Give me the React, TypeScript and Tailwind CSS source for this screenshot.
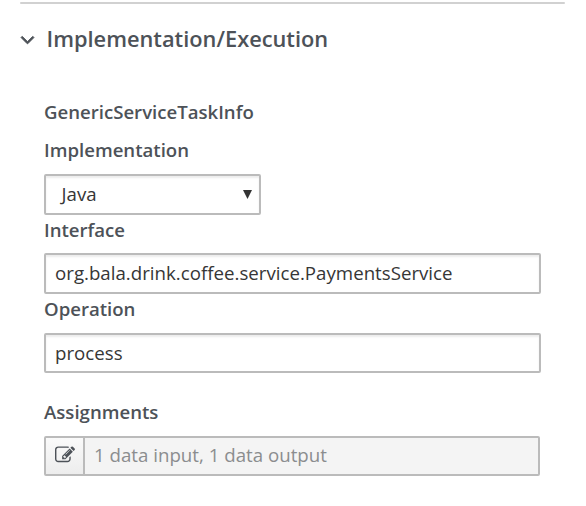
import React, { useState } from 'react';

const AngleDownIcon: React.FC<{ className?: string }> = ({ className }) => (
  <svg viewBox="0 0 1792 1792" fill="currentColor" className={className} aria-hidden="true">
    <path d="M1395 736q0 13-10 23l-466 466q-10 10-23 10t-23-10l-466-466q-10-10-10-23t10-23l50-50q10-10 23-10t23 10l393 393 393-393q10-10 23-10t23 10l50 50q10 10 10 23z" stroke="currentColor" strokeWidth="65" />
  </svg>
);

const EditIcon: React.FC<{ className?: string }> = ({ className }) => (
  <svg viewBox="0 0 1792 1792" fill="currentColor" className={className} aria-hidden="true">
    <path d="M888 1184l116-116-152-152-116 116v56h96v96h56zm440-720q-16-16-33 1l-350 350q-17 17-1 33t33-1l350-350q17-17 1-33zm80 594v190q0 119-84.5 203.5t-203.5 84.5h-832q-119 0-203.5-84.5t-84.5-203.5v-832q0-119 84.5-203.5t203.5-84.5h832q63 0 117 25 15 7 18 23 3 17-9 29l-49 49q-14 14-32 8-23-6-45-6h-832q-66 0-113 47t-47 113v832q0 66 47 113t113 47h832q66 0 113-47t47-113v-126q0-13 9-22l64-64q15-15 35-7t20 29zm-96-738l288 288-672 672h-288v-288zm444 132l-92 92-288-288 92-92q28-28 68-28t68 28l152 152q28 28 28 68t-28 68z" />
  </svg>
);

const App: React.FC = () => {
  const [open, setOpen] = useState(true);
  const [serviceInterface, setServiceInterface] = useState('org.bala.drink.coffee.service.PaymentsService');
  const [operation, setOperation] = useState('process');

  const labelClass = 'block h-6 text-[18.6px] leading-6 font-semibold text-[#4d5258]';
  const inputClass =
    'block w-[497px] border-2 border-[#bbb] rounded-[2px] bg-white px-[9px] text-[18.7px] text-[#363636] shadow-[inset_0_2px_2px_rgba(3,3,3,0.075)] focus:outline-none';

  return (
    <div className="h-[506px] overflow-hidden bg-white pt-[2px] pl-5 font-['Open_Sans',sans-serif]">
      <div className="h-[2px] w-[545px] rounded-full bg-[#d1d1d1]" />

      <button onClick={() => setOpen(!open)} className="mt-[19px] flex h-8 items-center text-[#4d5258]">
        <AngleDownIcon className="-ml-1 h-[23px] w-[23px]" />
        <span className="ml-[7.5px] text-[21.8px] leading-8 font-semibold">Implementation/Execution</span>
      </button>

      {open && (
        <div className="ml-6 pt-[45px]">
          <h4 className={labelClass}>GenericServiceTaskInfo</h4>

          <label htmlFor="implementation" className={`${labelClass} mt-[14px]`}>Implementation</label>
          <button
            id="implementation"
            className="mt-3 flex h-[41px] w-[217px] items-center justify-between rounded-[2px] border-2 border-[#bbb] bg-white pr-[7px] pl-[15.5px] text-[18.7px] text-[#363636] shadow-[inset_0_2px_2px_rgba(3,3,3,0.075)]"
          >
            <span className="pb-px">Java</span>
            <svg viewBox="0 0 9 9" className="h-[9px] w-[9px]" fill="#333" aria-hidden="true">
              <path d="M0 0h9L4.5 9z" />
            </svg>
          </button>

          <label htmlFor="interface" className={`${labelClass} mt-[3px]`}>Interface</label>
          <input
            id="interface"
            value={serviceInterface}
            onChange={(e) => setServiceInterface(e.target.value)}
            className={`${inputClass} mt-[11px] h-[41px] pb-[2px]`}
          />

          <label htmlFor="operation" className={`${labelClass} mt-[3px]`}>Operation</label>
          <input
            id="operation"
            value={operation}
            onChange={(e) => setOperation(e.target.value)}
            className={`${inputClass} mt-3 h-10 pb-[2px]`}
          />

          <label htmlFor="assignments" className={`${labelClass} mt-[27px]`}>Assignments</label>
          <div className="mt-3 flex h-10 w-[496px] rounded-[2px] border-2 border-[#bbb] bg-[#f4f4f4]">
            <button className="flex w-[39px] items-center justify-center border-r-2 border-[#bbb] bg-linear-to-b from-[#fafafa] to-[#ededed] pb-[2px] text-[#4d5258]">
              <EditIcon className="h-5 w-5" />
            </button>
            <input
              id="assignments"
              readOnly
              value="1 data input, 1 data output"
              className="min-w-0 flex-1 px-[9px] pb-[2px] text-[18.7px] text-[#8b8d8f] focus:outline-none"
            />
          </div>
        </div>
      )}
    </div>
  );
};

export default App;
